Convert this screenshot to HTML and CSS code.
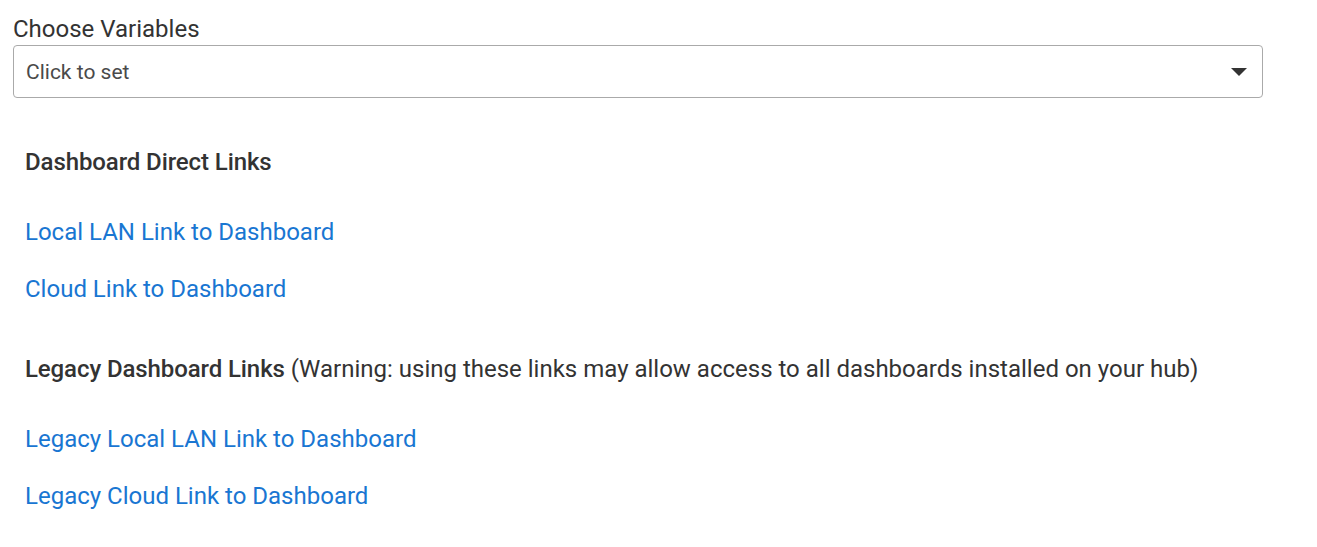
FILE: index.html
```html
<!DOCTYPE html>
<html>
<head>
  <title>Dashboard Links</title>
  <link rel="stylesheet" href="styles.css">
</head>
<body>
  <div class="page">
    <label class="field-label">Choose Variables</label>
    <div class="select-box">
      <span class="select-text">Click to set</span>
      <svg class="select-arrow" width="16" height="8" viewBox="0 0 16 8">
        <path d="M0 0 L16 0 L8 8 Z" fill="#333"/>
      </svg>
    </div>

    <div class="links">
      <h3 class="links-title">Dashboard Direct Links</h3>
      <a class="dash-link" href="#">Local LAN Link to Dashboard</a>
      <a class="dash-link" href="#">Cloud Link to Dashboard</a>

      <h3 class="links-title legacy"><b>Legacy Dashboard Links</b> <span class="note">(Warning: using these links may allow access to all dashboards installed on your hub)</span></h3>
      <a class="dash-link" href="#">Legacy Local LAN Link to Dashboard</a>
      <a class="dash-link" href="#">Legacy Cloud Link to Dashboard</a>
    </div>
  </div>
</body>
</html>
```

FILE: styles.css
```css
body {
  margin: 0;
  font-family: Roboto, "Liberation Sans", sans-serif;
  color: #333;
  background: #fff;
}
.page {
  padding: 15px 0 0 13px;
  width: 1250px;
}
.field-label {
  display: block;
  font-size: 24px;
  line-height: 28px;
  color: #333;
}
.select-box {
  margin-top: 2px;
  height: 53px;
  box-sizing: border-box;
  border: 1px solid #aaa;
  border-radius: 4px;
  display: flex;
  align-items: center;
  justify-content: space-between;
  padding: 1px 15px 0 12px;
}
.select-text {
  font-size: 21px;
  color: #4a4a4a;
}
.links {
  padding-left: 12px;
}
.links-title {
  margin: 50px 0 0;
  font-size: 24px;
  line-height: 28px;
  font-weight: 500;
  letter-spacing: -0.1px;
  color: #333;
}
.links-title.legacy {
  margin-top: 52px;
}
.links-title b {
  font-weight: 500;
}
.note {
  font-weight: 400;
  letter-spacing: 0;
}
.dash-link {
  display: block;
  width: max-content;
  font-size: 24px;
  line-height: 28px;
  color: #1976d2;
  text-decoration: none;
  margin-top: 29px;
}
.links-title + .dash-link {
  margin-top: 42px;
}
```
